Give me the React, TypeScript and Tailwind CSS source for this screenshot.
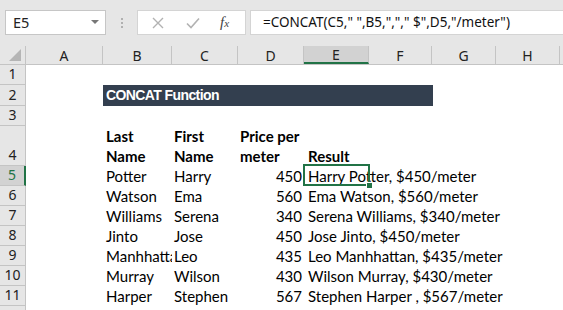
import React from 'react';

const cols = [
    { key: 'A', w: 'w-[77px]' },
    { key: 'B', w: 'w-[69px]' },
    { key: 'C', w: 'w-[66px]' },
    { key: 'D', w: 'w-[66px]' },
    { key: 'E', w: 'w-[65px]' },
    { key: 'F', w: 'w-[63px]' },
    { key: 'G', w: 'w-[64px]' },
    { key: 'H', w: 'w-[64px]' },
];

const people = [
    ['Potter', 'Harry', '450', 'Harry Potter, $450/meter'],
    ['Watson', 'Ema', '560', 'Ema Watson, $560/meter'],
    ['Williams', 'Serena', '340', 'Serena Williams, $340/meter'],
    ['Jinto', 'Jose', '450', 'Jose Jinto, $450/meter'],
    ['Manhhattan', 'Leo', '435', 'Leo Manhhattan, $435/meter'],
    ['Murray', 'Wilson', '430', 'Wilson Murray, $430/meter'],
    ['Harper', 'Stephen', '567', 'Stephen Harper , $567/meter'],
];

const cellFont = "font-['Lato','Liberation_Sans',sans-serif] text-[15px] text-black";

function RowHead({ n, h = 'h-[20px]', active = false }: { n: number; h?: string; active?: boolean }) {
    return (
        <div
            className={`${h} w-[26px] shrink-0 flex items-end justify-center border-b border-r border-[#c4c4c4] text-[14px] font-['Noto_Sans',sans-serif] ${
                active ? 'bg-[#d2d2d2] text-[#217346] border-r-2 border-r-[#217346]' : 'bg-[#e6e6e6] text-[#222]'
            }`}
        >
            {n}
        </div>
    );
}

function Row({ n, children, h = 'h-[20px]', active = false }: { n: number; children?: React.ReactNode; h?: string; active?: boolean }) {
    return (
        <div className="flex">
            <RowHead n={n} h={h} active={active} />
            <div className={`${h} flex flex-1 bg-white`}>{children}</div>
        </div>
    );
}

export default function App(): React.ReactElement {
    return (
        <div className="w-[563px] h-[310px] overflow-hidden bg-white select-none">
            {/* formula bar */}
            <div className="h-[46px] bg-[#e6e6e6] flex items-start pt-[10px] pl-[5px] font-['Noto_Sans',sans-serif]">
                <div className="w-[101px] h-[25px] bg-white border border-[#c6c6c6] flex items-center justify-between pl-[7px] pr-[6px] text-[14.5px] text-[#222]">
                    <span>E5</span>
                    <svg width="8" height="5" viewBox="0 0 8 5">
                        <path d="M0 0h8L4 4z" fill="#777" />
                    </svg>
                </div>
                <div className="w-[31px] h-[25px] flex flex-col items-center justify-center gap-[2px]">
                    <span className="w-[2px] h-[2px] bg-[#b0b0b0]" />
                    <span className="w-[2px] h-[2px] bg-[#b0b0b0]" />
                    <span className="w-[2px] h-[2px] bg-[#b0b0b0]" />
                </div>
                <div className="w-[109px] h-[25px] bg-white border border-[#d4d4d4] flex items-center pl-[14px]">
                    <svg width="12" height="12" viewBox="0 0 12 12">
                        <path d="M1 1l10 10M11 1L1 11" stroke="#b2b2b2" strokeWidth="1.4" />
                    </svg>
                    <svg width="14" height="12" viewBox="0 0 14 12" className="ml-[22px]">
                        <path d="M1 6.5l4 4L13 1.5" stroke="#b2b2b2" strokeWidth="1.6" fill="none" />
                    </svg>
                    <span className="ml-[20px] font-['Liberation_Serif',serif] italic text-[15px] text-[#444] leading-none">
                        f<span className="text-[11px]">x</span>
                    </span>
                </div>
                <div className="flex-1 h-[25px] ml-[4px] bg-white border border-[#d4d4d4] border-r-0 flex items-center pl-[12px] text-[13.5px] text-[#111] whitespace-nowrap">
                    =CONCAT(C5," ",B5,","," $",D5,"/meter")
                </div>
            </div>

            {/* column headers */}
            <div className="flex h-[19px] bg-[#e6e6e6] border-b border-[#c4c4c4] font-['Noto_Sans',sans-serif] text-[14px] text-[#222]">
                <div className="w-[26px] shrink-0 border-r border-[#c4c4c4] flex items-end justify-end pr-[4px] pb-[3px]">
                    <svg width="12" height="12" viewBox="0 0 12 12">
                        <path d="M12 0V12H0z" fill="#b5b5b5" />
                    </svg>
                </div>
                {cols.map((c) => (
                    <div
                        key={c.key}
                        className={`${c.w} shrink-0 flex items-center justify-center border-r border-[#c4c4c4] ${
                            c.key === 'E' ? 'bg-[#d2d2d2] border-b-2 border-b-[#217346]' : ''
                        }`}
                    >
                        {c.key}
                    </div>
                ))}
            </div>

            <div className={cellFont}>
                <Row n={1} />
                <Row n={2} h="h-[21px]">
                    <div className="w-[77px] shrink-0" />
                    <div className="w-[330px] shrink-0 bg-[#333f4f] text-white font-['Liberation_Sans',sans-serif] font-bold text-[14px] tracking-[-0.6px] flex items-center pl-[3px]">
                        CONCAT Function
                    </div>
                </Row>
                <Row n={3} />
                <Row n={4} h="h-[40px]">
                    <div className="w-[77px] shrink-0" />
                    <div className="w-[69px] shrink-0 pl-[3px] font-bold leading-[20px]">
                        Last
                        <br />
                        Name
                    </div>
                    <div className="w-[66px] shrink-0 pl-[2px] font-bold leading-[20px]">
                        First
                        <br />
                        Name
                    </div>
                    <div className="w-[66px] shrink-0 pl-[2px] font-bold leading-[20px] whitespace-nowrap">
                        Price per
                        <br />
                        meter
                    </div>
                    <div className="w-[65px] shrink-0 pl-[4px] font-bold leading-[20px] flex items-end">Result</div>
                </Row>
                {people.map((p, i) => (
                    <Row key={p[0]} n={i + 5} active={i === 0}>
                        <div className="w-[77px] shrink-0" />
                        <div className="w-[69px] shrink-0 pl-[3px] leading-[20px] overflow-hidden whitespace-nowrap">{p[0]}</div>
                        <div className="w-[66px] shrink-0 pl-[2px] leading-[20px] whitespace-nowrap">{p[1]}</div>
                        <div className="w-[66px] shrink-0 pr-[2px] leading-[20px] text-right">{p[2]}</div>
                        <div className="w-[65px] shrink-0 pl-[4px] leading-[20px] whitespace-nowrap relative">
                            {p[3]}
                            {i === 0 && (
                                <div className="absolute left-[-1px] top-[-2px] w-[67px] h-[22px] border-2 border-[#217346]">
                                    <div className="absolute right-[-5px] bottom-[-5px] w-[7px] h-[7px] bg-[#217346] border border-white" />
                                </div>
                            )}
                        </div>
                    </Row>
                ))}
                <Row n={12} />
            </div>
        </div>
    );
}
